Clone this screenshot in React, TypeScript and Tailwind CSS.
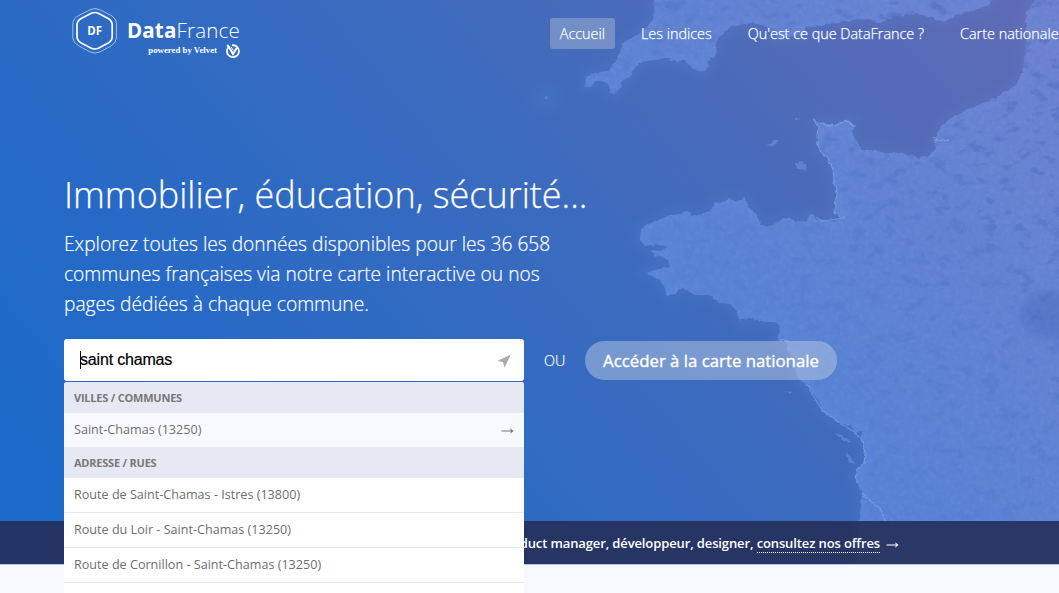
const ENGLAND =
  "M655 -14 L655 0 L653 20 L641 33 L632 38 L624 42 L621 50 L616 60 L610 70 L602 72 L594 73 L586 77 L585 87 L590 87 L594 82 L601 80 L608 84 L611 92 L614 95 L618 90 L622 87 L621 82 L631 75 L634 69 L640 63 L646 61 L655 60 L665 58 L672 60 L678 62 L684 60 L690 66 L698 71 L705 71 L709 66 L707 62 L713 58 L717 52 L715 42 L723 33 L729 28 L740 25 L753 23 L764 26 L773 33 L780 39 L790 37 L799 36 L807 27 L820 26 L834 23 L854 20 L870 19 L881 23 L894 16 L918 14 L932 18 L945 22 L955 15 L972 11 L989 5 L992 0 L992 -14Z";
const FRANCE =
  "M1042 -14 L1036 0 L1026 13 L1026 43 L1023 70 L1016 85 L996 98 L972 107 L957 115 L948 120 L940 128 L935 140 L935 150 L928 156 L918 158 L908 155 L901 153 L886 153 L874 150 L862 150 L855 139 L852 133 L855 125 L847 120 L840 122 L834 126 L826 124 L820 123 L813 118 L818 127 L817 137 L819 150 L829 160 L833 170 L834 183 L837 193 L834 213 L844 218 L833 221 L823 221 L815 219 L810 215 L805 221 L796 222 L789 217 L783 218 L777 223 L768 227 L761 224 L759 220 L754 212 L749 207 L747 202 L744 198 L736 202 L730 198 L722 203 L715 202 L712 210 L702 214 L692 217 L691 212 L687 210 L680 214 L670 215 L658 220 L648 224 L641 230 L640 240 L645 246 L658 245 L668 247 L660 251 L651 250 L655 257 L663 256 L668 260 L670 267 L658 269 L645 273 L654 277 L660 280 L665 287 L667 295 L676 294 L678 290 L682 288 L695 295 L709 295 L719 303 L730 304 L736 310 L741 323 L742 319 L749 318 L763 322 L778 322 L780 331 L777 340 L785 342 L787 350 L793 357 L795 370 L800 380 L807 385 L813 393 L820 402 L822 410 L832 417 L840 423 L851 426 L856 433 L862 430 L861 440 L865 453 L864 463 L856 470 L857 483 L862 493 L859 523 L856 580 L1075 580 L1075 -14Z";

function SatelliteMap() {
  return (
    <svg className="absolute inset-0 h-full w-full" viewBox="0 0 1059 564" preserveAspectRatio="none" aria-hidden="true">
      <defs>
        <clipPath id="land">
          <path d={ENGLAND} />
          <path d={FRANCE} />
        </clipPath>
        <filter id="relief" x="0" y="0" width="100%" height="100%" colorInterpolationFilters="sRGB">
          <feTurbulence type="fractalNoise" baseFrequency="0.06 0.09" numOctaves="5" seed="8" />
          <feColorMatrix values="0 0 0 0 0.24  0 0 0 0 0.36  0 0 0 0 0.7  6 0 0 0 -3.4" />
        </filter>
        <filter id="grain" x="0" y="0" width="100%" height="100%" colorInterpolationFilters="sRGB">
          <feTurbulence type="fractalNoise" baseFrequency="0.2" numOctaves="4" seed="3" />
          <feColorMatrix values="0 0 0 0 0.65  0 0 0 0 0.75  0 0 0 0 1  2.4 0 0 0 -0.9" />
        </filter>
        <filter id="soft" x="-20%" y="-20%" width="140%" height="140%">
          <feGaussianBlur stdDeviation="5" />
        </filter>
        <filter id="edge">
          <feTurbulence type="fractalNoise" baseFrequency="0.2" numOctaves="2" seed="5" result="n" />
          <feDisplacementMap in="SourceGraphic" in2="n" scale="4" xChannelSelector="R" yChannelSelector="G" />
          <feGaussianBlur stdDeviation="0.6" />
        </filter>
        <linearGradient id="fade" x1="0.6" x2="1" y1="0.5" y2="0.3">
          <stop offset="0" stopColor="#fff" stopOpacity="0.1" />
          <stop offset="0.5" stopColor="#fff" stopOpacity="0.45" />
          <stop offset="1" stopColor="#fff" stopOpacity="1" />
        </linearGradient>
        <mask id="east">
          <rect width="1059" height="564" fill="url(#fade)" />
        </mask>
      </defs>
      <g filter="url(#soft)" fill="none" stroke="#86b0ff" strokeOpacity="0.08" strokeWidth="9">
        <path d={FRANCE} />
        <path d={ENGLAND} />
      </g>
      <circle cx="546" cy="98" r="16" fill="#69b0f5" fillOpacity="0.06" filter="url(#soft)" />
      <g fill="#7fa9fb" fillOpacity="0.36" filter="url(#edge)">
        <path d={ENGLAND} />
        <path d={FRANCE} />
        <path d="M768 145 L774 140 L778 139 L776 144 L771 147Z" />
        <path d="M794 163 L802 162 L807 166 L806 170 L798 169Z" />
        <path d="M795 119 L799 117 L798 120Z" />
        <path d="M835 433 L842 435 L851 441 L847 443 L838 437Z" />
        <path d="M845 452 L852 458 L855 464 L848 461Z" />
        <path d="M786 391 L792 392 L789 394Z" />
        <path d="M543 97 L549 96 L547 100Z" />
      </g>
      <g clipPath="url(#land)">
        <g mask="url(#east)">
          <rect width="1059" height="564" filter="url(#relief)" opacity="0.3" />
        </g>
        <rect width="1059" height="564" filter="url(#grain)" opacity="0.08" />
        <ellipse cx="1052" cy="315" rx="32" ry="24" fill="#4560b4" fillOpacity="0.35" filter="url(#soft)" />
      </g>
      <g fill="none" stroke="#a6c8ff" strokeOpacity="0.35" strokeWidth="1.3" filter="url(#edge)">
        <path d="M813 118 L818 127 L817 137 L819 150 L829 160 L833 170 L834 183 L837 193 L834 213 L844 218 L823 221 L810 215" />
        <path d="M820 123 L834 126 L847 120 L854 126" />
        <path d="M807 385 L822 410 L840 423 L856 433 L862 440 L865 453 L864 463 L856 470 L857 483" />
        <path d="M862 493 L872 502 L881 510 L886 523 M932 138 L940 141 L949 140 M780 340 L790 341" />
      </g>
    </svg>
  );
}

function Logo() {
  return (
    <a className="flex h-[48px] w-[170px] gap-[11px] text-white">
      <svg className="h-[47px] w-[46px] shrink-0" viewBox="0 0 46 47" fill="none" stroke="#fff" aria-label="DataFrance">
        <path d="M18 1.8 Q23 -0.7 28 1.8 L39 7.4 Q44 10.2 44.4 15.5 V30 Q44 35 39 38 L28 43.9 Q23 46.3 18 43.9 L7 38 Q1.2 35 0.8 30 V15.5 Q1.2 10.2 7 7.4Z" strokeWidth="0.8" strokeOpacity="0.7" />
        <path d="M18.8 5.5 Q22.8 3.5 26.8 5.5 L36.2 10.5 Q40 12.7 40.2 16.8 V28.7 Q40 32.7 36.2 35 L26.8 40 Q22.8 42 18.8 40 L9.2 35 Q5.2 32.7 5 28.7 V16.8 Q5.2 12.7 9.2 10.5Z" strokeWidth="1.7" />
        <text x="22.7" y="27.2" textAnchor="middle" fill="#fff" stroke="none" fontFamily="Open Sans, sans-serif" fontSize="11.5" fontWeight="700">DF</text>
      </svg>
      <span className="flex w-[111px] shrink-0 flex-col items-end pt-[8px]">
        <span className="text-[20.5px] leading-[28px] tracking-[0.2px] whitespace-nowrap">
          <b className="font-bold">Data</b>
          <span className="font-light">France</span>
        </span>
        <span className="flex h-[14px] items-center gap-[9px]">
          <span className="pb-[2px] font-['Liberation_Serif',serif] text-[8.8px] leading-[12px] font-bold whitespace-nowrap">powered by Velvet</span>
          <svg className="h-[14px] w-[14px]" viewBox="0 0 14 14" fill="none" stroke="#fff">
            <path d="M3 2.6 A6 6 0 1 0 11.2 2.9 Q9 0.8 6 1.4" strokeWidth="1.8" />
            <path d="M1.2 1 L3.2 3.4 L7 10 L11 3.4" strokeWidth="2" />
            <path d="M5 2.6 L7.4 6.6" strokeWidth="1" />
          </svg>
        </span>
      </span>
    </a>
  );
}

const NAV = ["Accueil", "Les indices", "Qu'est ce que DataFrance ?", "Carte nationale"];
const STREETS = [
  "Route de Saint-Chamas - Istres (13800)",
  "Route du Loir - Saint-Chamas (13250)",
  "Route de Cornillon - Saint-Chamas (13250)",
];

function Arrow({ className }: { className: string }) {
  return (
    <svg className={className} viewBox="0 0 14 8" fill="none" stroke="currentColor" strokeWidth="1.1">
      <path d="M0.5 4 H12" />
      <path d="M9.8 1 L13.6 4 L9.8 7 L10.8 4Z" fill="currentColor" stroke="none" />
    </svg>
  );
}

function GroupTitle({ children }: { children: string }) {
  return <div className="h-[31px] bg-[#e6e9f3] px-[10px] text-[11px] leading-[32px] font-bold tracking-[-0.22px] text-[#777] uppercase">{children}</div>;
}

function Suggestions() {
  return (
    <div className="absolute top-[43px] left-0 z-10 h-[230px] w-[460px] overflow-hidden rounded-t-[3px] bg-white text-[12.6px] text-[#6e6e6e]">
      <GroupTitle>Villes / Communes</GroupTitle>
      <div className="flex h-[34px] items-center justify-between bg-[#f8f9fe] px-[10px]">
        <span>Saint-Chamas (13250)</span>
        <Arrow className="mt-[1px] h-[8px] w-[13px] text-[#777]" />
      </div>
      <GroupTitle>Adresse / Rues</GroupTitle>
      {STREETS.map((street) => (
        <div key={street} className="h-[35px] border-b border-[#e9e9e9] px-[10px] leading-[34px]">
          {street}
        </div>
      ))}
    </div>
  );
}

export default function App() {
  return (
    <div className="h-[593px] w-full overflow-hidden bg-[#f8f9fd] font-['Open_Sans',sans-serif] text-white">
      <section className="relative flex h-[565px] flex-col border-b border-[#a9c8f5] bg-[linear-gradient(50deg,#1b69c9_8%,#376bc0_50%,#506bb8_80%,#606bb6_100%)]">
        <SatelliteMap />
        <header className="relative flex h-[64px] shrink-0 pt-[8px] pl-[72px]">
          <Logo />
          <nav className="mt-[10px] ml-[310px] flex h-[31px] shrink-0 gap-[16.5px] text-[14.4px] leading-[32px] font-light whitespace-nowrap [-webkit-text-stroke:0.25px_white]">
            {NAV.map((item, i) => (
              <a key={item} className={i === 0 ? "rounded-[3px] bg-[#9fb3cf]/50 px-[9.75px]" : "px-[9.75px]"}>
                {item}
              </a>
            ))}
          </nav>
        </header>
        <main className="relative z-10 flex-1 pt-[105px] pl-[64px]">
          <h1 className="h-[52px] text-[36px] leading-[52px] font-light whitespace-nowrap [-webkit-text-stroke:0.25px_white]">Immobilier, éducation, sécurité...</h1>
          <p className="mt-[8px] text-[19.2px] leading-[30px] font-light whitespace-nowrap [-webkit-text-stroke:0.2px_white]">
            Explorez toutes les données disponibles pour les 36 658
            <br />
            communes françaises via notre carte interactive ou nos
            <br />
            pages dédiées à chaque commune.
          </p>
          <div className="mt-[20px] flex h-[42px] items-center">
            <div className="relative flex h-[42px] w-[460px] items-center justify-between rounded-[3px] bg-white px-[13px] pl-[16px] text-black">
              <div className="flex items-center font-['Liberation_Sans',sans-serif] text-[16px]">
                <span className="mr-[-1px] h-[18px] w-px bg-black" />
                <span className="tracking-[-0.18px] [-webkit-text-stroke:0.2px_black]">saint chamas</span>
              </div>
              <svg className="mt-px h-[14px] w-[14px]" viewBox="0 0 14 14" fill="#aaa">
                <path d="M13.6 0.6 L7.6 13.4 L6 8 L0.4 7Z" />
              </svg>
              <Suggestions />
            </div>
            <span className="mt-[2px] ml-[20px] w-[22px] text-[14.4px] font-light [-webkit-text-stroke:0.2px_white]">OU</span>
            <button className="mt-[1px] ml-[19px] h-[39px] w-[252px] rounded-full bg-[#b6c8e2]/50 pt-[1px] text-[16.8px] whitespace-nowrap [-webkit-text-stroke:0.35px_white]">
              Accéder à la carte nationale
            </button>
          </div>
        </main>
        <footer className="relative flex h-[43px] shrink-0 items-center justify-end bg-[#26305a]/90 pt-[2px] pr-[160px] text-[13px] font-semibold tracking-[-0.12px] whitespace-nowrap">
          <span>
            DataFrance recrute : product manager, développeur, designer,{" "}
            <a className="border-b border-dotted border-white">consultez nos offres</a>
          </span>
          <Arrow className="mt-[2px] ml-[6px] h-[8px] w-[13px]" />
        </footer>
      </section>
    </div>
  );
}
